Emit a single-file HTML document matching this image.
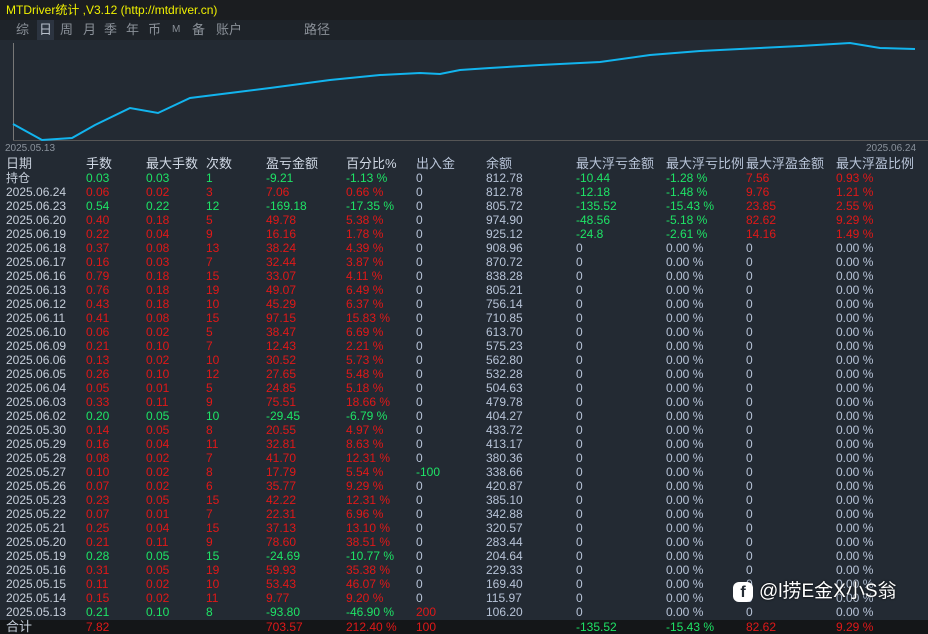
<!DOCTYPE html><html><head><meta charset="utf-8"><style>
*{margin:0;padding:0;box-sizing:border-box}
body{width:928px;height:634px;background:#232a33;font-family:"Liberation Sans","Noto Sans CJK SC",sans-serif;font-size:12px;color:#c6ceda;position:relative;overflow:hidden}
.top{position:absolute;left:0;top:0;width:928px;height:20px;background:#1b1d20;color:#f0f000;font-size:12px;line-height:20px;padding-left:6px}
.tabs{position:absolute;left:0;top:20px;width:928px;height:20px;background:#1e2329;color:#8a9098;font-size:13px;line-height:20px}
.tabs span{position:absolute;top:0}
.sel{background:#2c3440;color:#b8c0cc;padding:0 2px}
.r{position:absolute;left:0;width:928px;height:14px;line-height:14px;white-space:nowrap}
.r span{position:absolute;top:0}
.r span:nth-child(1){left:6px}.r span:nth-child(2){left:86px}.r span:nth-child(3){left:146px}.r span:nth-child(4){left:206px}.r span:nth-child(5){left:266px}.r span:nth-child(6){left:346px}.r span:nth-child(7){left:416px}.r span:nth-child(8){left:486px}.r span:nth-child(9){left:576px}.r span:nth-child(10){left:666px}.r span:nth-child(11){left:746px}.r span:nth-child(12){left:836px}
.h{font-size:13px;color:#d0d8e4}
.R span{color:#e01818}.G span{color:#1ee466}
.r span:nth-child(1){color:#c6ceda}
.r span:nth-child(7),.r span:nth-child(8){color:#b8c4d8}
.r span:nth-child(9),.r span:nth-child(10),.r span:nth-child(11),.r span:nth-child(12){color:#b8c4d8}
.r span.g{color:#1ee466}.r span.d{color:#e01818}
.tot{background:#141618;height:14px}
</style></head><body>
<div class="top">MTDriver统计 ,V3.12 (http://mtdriver.cn)</div>
<div class="tabs"><span style="left:16px">综</span><span class="sel" style="left:37px">日</span><span style="left:60px">周</span><span style="left:83px">月</span><span style="left:104px">季</span><span style="left:126px">年</span><span style="left:148px">币</span><span style="left:172px;font-size:10px">M</span><span style="left:192px">备</span><span style="left:216px">账户</span><span style="left:304px">路径</span></div>
<svg style="position:absolute;left:0;top:40px" width="928" height="115">
<line x1="13.5" y1="3" x2="13.5" y2="100" stroke="#777" stroke-width="1"/>
<line x1="13" y1="100.5" x2="928" y2="100.5" stroke="#555" stroke-width="1"/>
<polyline fill="none" stroke="#12b4ee" stroke-width="2" points="13,84 42,100 72,98 95,85 130,68 158,73 190,58 230,53 270,48 330,40 380,35 420,33 440,34 460,30 490,28 540,25 600,22 650,15 700,11 760,8 800,6 850,3 880,8 915,9"/>
<text x="5" y="111" fill="#8a929c" font-size="10" font-family="Liberation Sans">2025.05.13</text>
<text x="866" y="111" fill="#8a929c" font-size="10" font-family="Liberation Sans">2025.06.24</text>
</svg>
<div class="r h" style="top:157px"><span>日期</span><span>手数</span><span>最大手数</span><span>次数</span><span>盈亏金额</span><span>百分比%</span><span>出入金</span><span>余额</span><span>最大浮亏金额</span><span>最大浮亏比例</span><span>最大浮盈金额</span><span>最大浮盈比例</span></div>
<div class="r G" style="top:171px"><span>持仓</span><span>0.03</span><span>0.03</span><span>1</span><span>-9.21</span><span>-1.13 %</span><span>0</span><span>812.78</span><span class="g">-10.44</span><span class="g">-1.28 %</span><span class="d">7.56</span><span class="d">0.93 %</span></div>
<div class="r R" style="top:185px"><span>2025.06.24</span><span>0.06</span><span>0.02</span><span>3</span><span>7.06</span><span>0.66 %</span><span>0</span><span>812.78</span><span class="g">-12.18</span><span class="g">-1.48 %</span><span class="d">9.76</span><span class="d">1.21 %</span></div>
<div class="r G" style="top:199px"><span>2025.06.23</span><span>0.54</span><span>0.22</span><span>12</span><span>-169.18</span><span>-17.35 %</span><span>0</span><span>805.72</span><span class="g">-135.52</span><span class="g">-15.43 %</span><span class="d">23.85</span><span class="d">2.55 %</span></div>
<div class="r R" style="top:213px"><span>2025.06.20</span><span>0.40</span><span>0.18</span><span>5</span><span>49.78</span><span>5.38 %</span><span>0</span><span>974.90</span><span class="g">-48.56</span><span class="g">-5.18 %</span><span class="d">82.62</span><span class="d">9.29 %</span></div>
<div class="r R" style="top:227px"><span>2025.06.19</span><span>0.22</span><span>0.04</span><span>9</span><span>16.16</span><span>1.78 %</span><span>0</span><span>925.12</span><span class="g">-24.8</span><span class="g">-2.61 %</span><span class="d">14.16</span><span class="d">1.49 %</span></div>
<div class="r R" style="top:241px"><span>2025.06.18</span><span>0.37</span><span>0.08</span><span>13</span><span>38.24</span><span>4.39 %</span><span>0</span><span>908.96</span><span>0</span><span>0.00 %</span><span>0</span><span>0.00 %</span></div>
<div class="r R" style="top:255px"><span>2025.06.17</span><span>0.16</span><span>0.03</span><span>7</span><span>32.44</span><span>3.87 %</span><span>0</span><span>870.72</span><span>0</span><span>0.00 %</span><span>0</span><span>0.00 %</span></div>
<div class="r R" style="top:269px"><span>2025.06.16</span><span>0.79</span><span>0.18</span><span>15</span><span>33.07</span><span>4.11 %</span><span>0</span><span>838.28</span><span>0</span><span>0.00 %</span><span>0</span><span>0.00 %</span></div>
<div class="r R" style="top:283px"><span>2025.06.13</span><span>0.76</span><span>0.18</span><span>19</span><span>49.07</span><span>6.49 %</span><span>0</span><span>805.21</span><span>0</span><span>0.00 %</span><span>0</span><span>0.00 %</span></div>
<div class="r R" style="top:297px"><span>2025.06.12</span><span>0.43</span><span>0.18</span><span>10</span><span>45.29</span><span>6.37 %</span><span>0</span><span>756.14</span><span>0</span><span>0.00 %</span><span>0</span><span>0.00 %</span></div>
<div class="r R" style="top:311px"><span>2025.06.11</span><span>0.41</span><span>0.08</span><span>15</span><span>97.15</span><span>15.83 %</span><span>0</span><span>710.85</span><span>0</span><span>0.00 %</span><span>0</span><span>0.00 %</span></div>
<div class="r R" style="top:325px"><span>2025.06.10</span><span>0.06</span><span>0.02</span><span>5</span><span>38.47</span><span>6.69 %</span><span>0</span><span>613.70</span><span>0</span><span>0.00 %</span><span>0</span><span>0.00 %</span></div>
<div class="r R" style="top:339px"><span>2025.06.09</span><span>0.21</span><span>0.10</span><span>7</span><span>12.43</span><span>2.21 %</span><span>0</span><span>575.23</span><span>0</span><span>0.00 %</span><span>0</span><span>0.00 %</span></div>
<div class="r R" style="top:353px"><span>2025.06.06</span><span>0.13</span><span>0.02</span><span>10</span><span>30.52</span><span>5.73 %</span><span>0</span><span>562.80</span><span>0</span><span>0.00 %</span><span>0</span><span>0.00 %</span></div>
<div class="r R" style="top:367px"><span>2025.06.05</span><span>0.26</span><span>0.10</span><span>12</span><span>27.65</span><span>5.48 %</span><span>0</span><span>532.28</span><span>0</span><span>0.00 %</span><span>0</span><span>0.00 %</span></div>
<div class="r R" style="top:381px"><span>2025.06.04</span><span>0.05</span><span>0.01</span><span>5</span><span>24.85</span><span>5.18 %</span><span>0</span><span>504.63</span><span>0</span><span>0.00 %</span><span>0</span><span>0.00 %</span></div>
<div class="r R" style="top:395px"><span>2025.06.03</span><span>0.33</span><span>0.11</span><span>9</span><span>75.51</span><span>18.66 %</span><span>0</span><span>479.78</span><span>0</span><span>0.00 %</span><span>0</span><span>0.00 %</span></div>
<div class="r G" style="top:409px"><span>2025.06.02</span><span>0.20</span><span>0.05</span><span>10</span><span>-29.45</span><span>-6.79 %</span><span>0</span><span>404.27</span><span>0</span><span>0.00 %</span><span>0</span><span>0.00 %</span></div>
<div class="r R" style="top:423px"><span>2025.05.30</span><span>0.14</span><span>0.05</span><span>8</span><span>20.55</span><span>4.97 %</span><span>0</span><span>433.72</span><span>0</span><span>0.00 %</span><span>0</span><span>0.00 %</span></div>
<div class="r R" style="top:437px"><span>2025.05.29</span><span>0.16</span><span>0.04</span><span>11</span><span>32.81</span><span>8.63 %</span><span>0</span><span>413.17</span><span>0</span><span>0.00 %</span><span>0</span><span>0.00 %</span></div>
<div class="r R" style="top:451px"><span>2025.05.28</span><span>0.08</span><span>0.02</span><span>7</span><span>41.70</span><span>12.31 %</span><span>0</span><span>380.36</span><span>0</span><span>0.00 %</span><span>0</span><span>0.00 %</span></div>
<div class="r R" style="top:465px"><span>2025.05.27</span><span>0.10</span><span>0.02</span><span>8</span><span>17.79</span><span>5.54 %</span><span class="g">-100</span><span>338.66</span><span>0</span><span>0.00 %</span><span>0</span><span>0.00 %</span></div>
<div class="r R" style="top:479px"><span>2025.05.26</span><span>0.07</span><span>0.02</span><span>6</span><span>35.77</span><span>9.29 %</span><span>0</span><span>420.87</span><span>0</span><span>0.00 %</span><span>0</span><span>0.00 %</span></div>
<div class="r R" style="top:493px"><span>2025.05.23</span><span>0.23</span><span>0.05</span><span>15</span><span>42.22</span><span>12.31 %</span><span>0</span><span>385.10</span><span>0</span><span>0.00 %</span><span>0</span><span>0.00 %</span></div>
<div class="r R" style="top:507px"><span>2025.05.22</span><span>0.07</span><span>0.01</span><span>7</span><span>22.31</span><span>6.96 %</span><span>0</span><span>342.88</span><span>0</span><span>0.00 %</span><span>0</span><span>0.00 %</span></div>
<div class="r R" style="top:521px"><span>2025.05.21</span><span>0.25</span><span>0.04</span><span>15</span><span>37.13</span><span>13.10 %</span><span>0</span><span>320.57</span><span>0</span><span>0.00 %</span><span>0</span><span>0.00 %</span></div>
<div class="r R" style="top:535px"><span>2025.05.20</span><span>0.21</span><span>0.11</span><span>9</span><span>78.60</span><span>38.51 %</span><span>0</span><span>283.44</span><span>0</span><span>0.00 %</span><span>0</span><span>0.00 %</span></div>
<div class="r G" style="top:549px"><span>2025.05.19</span><span>0.28</span><span>0.05</span><span>15</span><span>-24.69</span><span>-10.77 %</span><span>0</span><span>204.64</span><span>0</span><span>0.00 %</span><span>0</span><span>0.00 %</span></div>
<div class="r R" style="top:563px"><span>2025.05.16</span><span>0.31</span><span>0.05</span><span>19</span><span>59.93</span><span>35.38 %</span><span>0</span><span>229.33</span><span>0</span><span>0.00 %</span><span>0</span><span>0.00 %</span></div>
<div class="r R" style="top:577px"><span>2025.05.15</span><span>0.11</span><span>0.02</span><span>10</span><span>53.43</span><span>46.07 %</span><span>0</span><span>169.40</span><span>0</span><span>0.00 %</span><span>0</span><span>0.00 %</span></div>
<div class="r R" style="top:591px"><span>2025.05.14</span><span>0.15</span><span>0.02</span><span>11</span><span>9.77</span><span>9.20 %</span><span>0</span><span>115.97</span><span>0</span><span>0.00 %</span><span>0</span><span>0.00 %</span></div>
<div class="r G" style="top:605px"><span>2025.05.13</span><span>0.21</span><span>0.10</span><span>8</span><span>-93.80</span><span>-46.90 %</span><span class="d">200</span><span>106.20</span><span>0</span><span>0.00 %</span><span>0</span><span>0.00 %</span></div>
<div class="r R tot" style="top:620px;height:14px"><span style="font-size:13px">合计</span><span>7.82</span><span></span><span></span><span>703.57</span><span>212.40 %</span><span class="d">100</span><span></span><span class="g">-135.52</span><span class="g">-15.43 %</span><span class="d">82.62</span><span class="d">9.29 %</span></div>
<div style="position:absolute;left:733px;top:582px;width:20px;height:20px;border-radius:6px;background:#fff;color:#232a33;font-weight:bold;font-size:16px;line-height:21px;text-align:center;font-family:'Liberation Sans',sans-serif">f</div>
<div style="position:absolute;left:759px;top:579px;color:#fff;font-size:19px;line-height:26px;font-family:'Liberation Sans','Noto Sans CJK SC',sans-serif;text-shadow:0 0 2px #000">@l捞E金X小S翁</div>
</body></html>
